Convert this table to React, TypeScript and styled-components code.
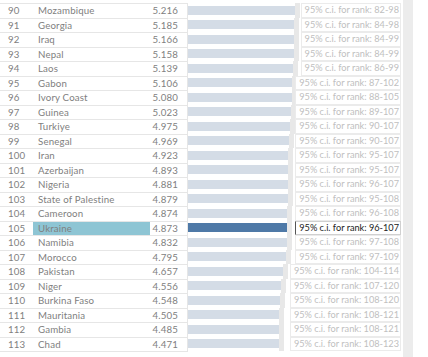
import styled, { createGlobalStyle } from "styled-components";

type Row = { rank: number; country: string; score: number; ci: string };

const ROWS: Row[] = [
  { rank: 90, country: "Mozambique", score: 5.216, ci: "82-98" },
  { rank: 91, country: "Georgia", score: 5.185, ci: "84-98" },
  { rank: 92, country: "Iraq", score: 5.166, ci: "84-99" },
  { rank: 93, country: "Nepal", score: 5.158, ci: "84-99" },
  { rank: 94, country: "Laos", score: 5.139, ci: "86-99" },
  { rank: 95, country: "Gabon", score: 5.106, ci: "87-102" },
  { rank: 96, country: "Ivory Coast", score: 5.08, ci: "88-105" },
  { rank: 97, country: "Guinea", score: 5.023, ci: "89-107" },
  { rank: 98, country: "Turkiye", score: 4.975, ci: "90-107" },
  { rank: 99, country: "Senegal", score: 4.969, ci: "90-107" },
  { rank: 100, country: "Iran", score: 4.923, ci: "95-107" },
  { rank: 101, country: "Azerbaijan", score: 4.893, ci: "95-107" },
  { rank: 102, country: "Nigeria", score: 4.881, ci: "96-107" },
  { rank: 103, country: "State of Palestine", score: 4.879, ci: "95-108" },
  { rank: 104, country: "Cameroon", score: 4.874, ci: "96-108" },
  { rank: 105, country: "Ukraine", score: 4.873, ci: "96-107" },
  { rank: 106, country: "Namibia", score: 4.832, ci: "97-108" },
  { rank: 107, country: "Morocco", score: 4.795, ci: "97-109" },
  { rank: 108, country: "Pakistan", score: 4.657, ci: "104-114" },
  { rank: 109, country: "Niger", score: 4.556, ci: "107-120" },
  { rank: 110, country: "Burkina Faso", score: 4.548, ci: "108-120" },
  { rank: 111, country: "Mauritania", score: 4.505, ci: "108-121" },
  { rank: 112, country: "Gambia", score: 4.485, ci: "108-121" },
  { rank: 113, country: "Chad", score: 4.471, ci: "108-123" },
];

const SELECTED = 105;

const GlobalStyle = createGlobalStyle`
  html, body {
    margin: 0;
    padding: 0;
    background: #ffffff;
  }
  body {
    font-family: Lato, "Open Sans", sans-serif;
    overflow: hidden;
  }
`;

const Page = styled.div`
  display: flex;
  width: 428px;
  height: 357px;
  overflow: hidden;
`;

const Table = styled.div`
  width: 401px;
  padding-top: 3px;
  display: flex;
  flex-direction: column;
`;

const RowLine = styled.div`
  display: grid;
  grid-template-columns: 188px 213px;
  height: 14.5px;
`;

const Left = styled.div<{ $last?: boolean }>`
  display: grid;
  grid-template-columns: 33px 117px 1fr;
  border-top: 1px solid #e6e6e6;
  border-bottom: ${(p) => (p.$last ? "1px solid #e6e6e6" : "none")};
  border-right: 1px solid #e6e6e6;
  box-sizing: border-box;
  font-size: 9.7px;
  letter-spacing: 0.15px;
  color: #808080;
  line-height: 13.5px;
`;

const Rank = styled.div`
  padding-left: 8px;
`;

const Country = styled.div<{ $selected?: boolean }>`
  padding-left: 5px;
  background: ${(p) => (p.$selected ? "#8ec5d4" : "transparent")};
  white-space: nowrap;
`;

const Score = styled.div`
  text-align: right;
  padding-right: 9px;
`;

const Chart = styled.div`
  position: relative;
  display: flex;
  align-items: center;
  height: 14.5px;
`;

const Bar = styled.div<{ $selected?: boolean }>`
  height: 9px;
  background: ${(p) => (p.$selected ? "#4e79a7" : "#d4dce6")};
`;

const Band = styled.div`
  align-self: stretch;
  width: 5px;
  background: #e8e8e8;
`;

const Label = styled.div<{ $selected?: boolean }>`
  position: absolute;
  right: 0;
  top: 0;
  height: 14.5px;
  box-sizing: border-box;
  padding: 0 1px 0 3px;
  background: #ffffff;
  border: 1px solid ${(p) => (p.$selected ? "#d0d0d0" : "#ebebeb")};
  border-left-color: ${(p) => (p.$selected ? "#555555" : "#ebebeb")};
  font-size: 9.2px;
  line-height: 12.5px;
  color: ${(p) => (p.$selected ? "#222222" : "#c0c0c0")};
  white-space: nowrap;
`;

const Scroll = styled.div`
  margin-left: 2px;
  width: 10px;
  background: #ececec;
`;

const barWidth = (score: number) => (score - 0.25) * 21.5;

export default function App() {
  return (
    <Page>
      <GlobalStyle />
      <Table>
        {ROWS.map((r, i) => {
          const sel = r.rank === SELECTED;
          return (
            <RowLine key={r.rank}>
              <Left $last={i === ROWS.length - 1}>
                <Rank>{r.rank}</Rank>
                <Country $selected={sel}>{r.country}</Country>
                <Score>{r.score.toFixed(3)}</Score>
              </Left>
              <Chart>
                <Bar $selected={sel} style={{ width: barWidth(r.score) }} />
                <Band />
                <Label $selected={sel}>95% c.i. for rank: {r.ci}</Label>
              </Chart>
            </RowLine>
          );
        })}
      </Table>
      <Scroll />
    </Page>
  );
}
